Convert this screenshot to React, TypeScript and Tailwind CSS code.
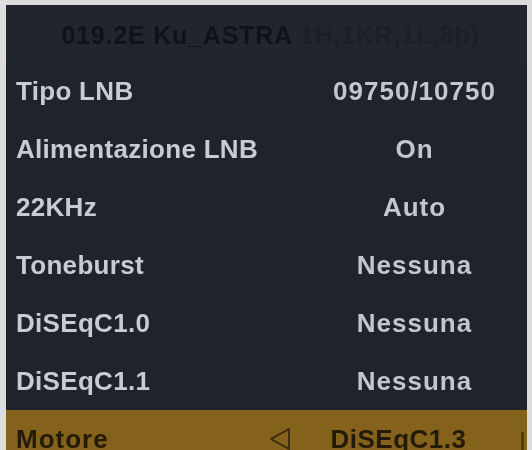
import React from "react";

const rows: [string, string][] = [
  ["Tipo LNB", "09750/10750"],
  ["Alimentazione LNB", "On"],
  ["22KHz", "Auto"],
  ["Toneburst", "Nessuna"],
  ["DiSEqC1.0", "Nessuna"],
  ["DiSEqC1.1", "Nessuna"],
];

function LeftArrow() {
  return (
    <svg width="24" height="24" viewBox="0 0 24 24" className="shrink-0 text-[#3a2a0c]">
      <path d="M21 2 L3 12 L21 22 Z" fill="none" stroke="currentColor" strokeWidth="1.8" strokeLinejoin="round" />
    </svg>
  );
}

export default function App() {
  return (
    <div
      className="w-[532px] h-[450px] overflow-hidden bg-[#dcdcdc] pt-[5px] pl-[6px] pr-[5px]"
      style={{ fontFamily: '"Liberation Sans", Arial, sans-serif' }}
    >
      <div className="h-[445px] overflow-hidden bg-[#1f232c] flex flex-col">
        <div className="h-[57px] shrink-0 flex items-center justify-center pl-2 pt-[4px] bg-[#22252e]">
          <span className="text-[25px] font-bold text-[#101218] tracking-[0.8px] blur-[0.7px]">
            019.2E Ku_ASTRA <span className="text-[#1c1f26]">1H,1KR,1L,8þ)</span>
          </span>
        </div>
        {rows.map(([label, value]) => (
          <div key={label} className="h-[58px] shrink-0 grid grid-cols-[300px_1fr] items-center pl-[10px]">
            <span className="text-[26px] font-bold text-[#c9cbd2] tracking-[0.3px] blur-[0.4px]">{label}</span>
            <span className="text-[26px] font-bold text-[#c3c6ce] text-center pr-[14px] tracking-[1px] blur-[0.4px]">
              {value}
            </span>
          </div>
        ))}
        <div className="h-[58px] shrink-0 bg-[#85621b] grid grid-cols-[244px_40px_1fr] items-center pl-[10px] relative">
          <span className="text-[26px] font-bold text-[#241a08] tracking-[1px] blur-[0.4px]">Motore</span>
          <span className="flex justify-center">
            <LeftArrow />
          </span>
          <span className="text-[26px] font-bold text-[#241a08] text-center pr-[30px] tracking-[0.5px] blur-[0.4px]">
            DiSEqC1.3
          </span>
          <span className="absolute right-[3px] top-[22px] w-[3px] h-[30px] bg-[#3a2a0c] opacity-70" />
        </div>
      </div>
    </div>
  );
}
